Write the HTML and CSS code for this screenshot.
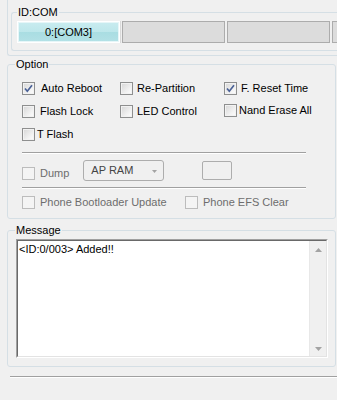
FILE: index.html
```html
<!DOCTYPE html>
<html lang="en">
<head>
    <meta charset="UTF-8">
    <title>Download Option</title>
    <link rel="stylesheet" href="styles.css">
</head>
<body>
    <!-- Port list -->
    <div class="com-frame">
        <fieldset class="group group-com">
            <legend>ID:COM</legend>
            <div class="tabs">
                <div class="tab active">0:[COM3]</div>
                <div class="tab"></div>
                <div class="tab"></div>
                <div class="tab"></div>
            </div>
        </fieldset>
    </div>

    <!-- Option -->
    <fieldset class="group group-option">
        <legend>Option</legend>
        <div class="check-grid">
            <div class="check gap6"><span class="box checked"><svg viewBox="0 0 11 11"><path d="M2 5.5 L4.3 8.2 L9 2.3"/></svg></span>Auto Reboot</div>
            <div class="check"><span class="box"></span>Re-Partition</div>
            <div class="check"><span class="box checked"><svg viewBox="0 0 11 11"><path d="M2 5.5 L4.3 8.2 L9 2.3"/></svg></span>F. Reset Time</div>
            <div class="check gap5"><span class="box"></span>Flash Lock</div>
            <div class="check"><span class="box"></span>LED Control</div>
            <div class="check tight up"><span class="box"></span>Nand Erase All</div>
            <div class="check tight"><span class="box"></span>T Flash</div>
        </div>

        <div class="sep"></div>

        <div class="dump-row">
            <div class="check gap5 disabled dump"><span class="box"></span>Dump</div>
            <div class="combo">
                <span>AP RAM</span>
                <svg class="combo-arrow" viewBox="0 0 5 3"><polygon points="0,0 5,0 2.5,3"/></svg>
            </div>
            <div class="small-box"></div>
        </div>

        <div class="sep"></div>

        <div class="phone-row">
            <div class="check gap5 disabled"><span class="box"></span>Phone Bootloader Update</div>
            <div class="check gap5 disabled"><span class="box"></span>Phone EFS Clear</div>
        </div>
    </fieldset>

    <!-- Message -->
    <fieldset class="group group-message">
        <legend>Message</legend>
        <div class="msg-box">
            <div class="msg-inner">
                <div class="msg-text">&lt;ID:0/003&gt; Added!!</div>
                <div class="scrollbar">
                    <svg viewBox="0 0 7 4"><polygon points="0,4 7,4 3.5,0"/></svg>
                    <svg viewBox="0 0 7 4"><polygon points="0,0 7,0 3.5,4"/></svg>
                </div>
            </div>
        </div>
    </fieldset>

    <div class="bottom-sep"></div>
</body>
</html>
```

FILE: styles.css
```css
* {
    box-sizing: border-box;
}

html, body {
    overflow: hidden;
}

body {
    margin: 0;
    width: 337px;
    height: 400px;
    background-color: #f0f0f0;
    color: #000;
    font-family: "Liberation Sans", Arial, sans-serif;
    font-size: 11px;
    line-height: 13px;
}

/* Group boxes */
.group {
    border: 1px solid #d5dfe5;
    border-radius: 3px;
    margin: 0;
    min-width: 0;
}

.group legend {
    padding: 0 1px;
    line-height: 13px;
}

/* ID:COM - runs on past the right edge, so no right border */
.com-frame {
    margin: -6px 0 0 7px;
    padding: 0 0 4px 3px;
    border: 1px solid #d5dfe5;
    border-right: none;
    border-radius: 3px 0 0 3px;
}

.group-com {
    margin-top: 11px;
    padding: 2px 0 7px 5px;
    border-right: none;
    border-radius: 3px 0 0 3px;
}

.tabs {
    display: flex;
    gap: 2px;
    overflow: hidden;
}

.tab {
    width: 103px;
    height: 22px;
    flex-shrink: 0;
    background-color: #dcdcdc;
    border: 1px solid #acacac;
    text-align: center;
    line-height: 20px;
}

.tab.active {
    border-color: #fff;
    background: linear-gradient(#c9ecf0, #bde7eb 50%, #a9dde2 50%, #b3e1e6);
    box-shadow: inset 0 0 0 1px #e6f6f8;
    outline: 1px solid #d9d9d9;
}

/* Option */
.group-option {
    margin: 2px 0 0 7px;
    width: 329px;
    padding: 6px 8px 4px 14px;
}

.group-option legend {
    margin-left: -7px;
}

.check-grid {
    display: grid;
    grid-template-columns: 98px 104px auto;
    grid-auto-rows: 23px;
}

.check {
    display: flex;
    align-items: center;
    gap: 4px;
    white-space: nowrap;
}

.check.gap6 {
    gap: 6px;
}

.check.gap5 {
    gap: 5px;
}

.check.tight {
    gap: 2px;
}

.check.up {
    margin-top: -2px;
}

.box {
    width: 13px;
    height: 13px;
    flex-shrink: 0;
    border: 1px solid #8e8f8f;
    background: linear-gradient(135deg, #d6d6d6, #f4f4f4 70%, #fdfdfd);
    box-shadow: inset 0 0 0 1px #f2f2f2;
}

.box svg {
    display: block;
    width: 11px;
    height: 11px;
}

.box svg path {
    fill: none;
    stroke: #4a6196;
    stroke-width: 1.7;
}

.check.disabled {
    color: #6d6d6d;
}

.check.disabled .box {
    border-color: #bcbcbc;
    background: #f4f4f4;
    box-shadow: none;
}

.sep {
    width: 284px;
    height: 2px;
    margin-top: 6px;
    border-top: 1px solid #a0a0a0;
    border-bottom: 1px solid #fff;
}

.dump-row {
    display: flex;
    align-items: center;
    height: 21px;
    margin-top: 6px;
}

.dump {
    margin-top: 5px;
}

.combo {
    width: 81px;
    height: 21px;
    margin-left: 14px;
    padding: 0 6px 0 7px;
    display: flex;
    align-items: center;
    justify-content: space-between;
    border: 1px solid #adadad;
    border-radius: 3px;
    color: #444;
}

.combo-arrow {
    width: 5px;
    height: 3px;
    margin-top: 1px;
}

.combo-arrow polygon {
    fill: #a3a3a3;
}

.small-box {
    width: 30px;
    height: 19px;
    margin-left: 38px;
    border: 1px solid #adadad;
    border-radius: 2px;
}

.phone-row {
    display: grid;
    grid-template-columns: 163px auto;
    height: 23px;
    margin-top: 2px;
}

/* Message */
.group-message {
    margin: 5px 0 0 7px;
    width: 329px;
    padding: 2px 7px 8px 8px;
}

.group-message legend {
    margin-left: -1px;
}

.msg-box {
    height: 119px;
    border: 1px solid;
    border-color: #a0a0a0 #fff #fff #a0a0a0;
}

.msg-inner {
    height: 100%;
    display: flex;
    border: 1px solid;
    border-color: #696969 #e3e3e3 #e3e3e3 #696969;
    background-color: #fff;
}

.msg-text {
    flex: 1;
    padding: 2px 1px;
}

.scrollbar {
    width: 17px;
    display: flex;
    flex-direction: column;
    justify-content: space-between;
    align-items: center;
    padding: 7px 0 5px;
    background-color: #f0f0f0;
    border-left: 1px solid #e8e8e8;
}

.scrollbar svg {
    width: 7px;
    height: 4px;
}

.scrollbar polygon {
    fill: #a3a3a3;
}

.bottom-sep {
    margin: 9px 0 0 10px;
    height: 2px;
    border-top: 1px solid #a0a0a0;
    border-bottom: 1px solid #fff;
}
```
